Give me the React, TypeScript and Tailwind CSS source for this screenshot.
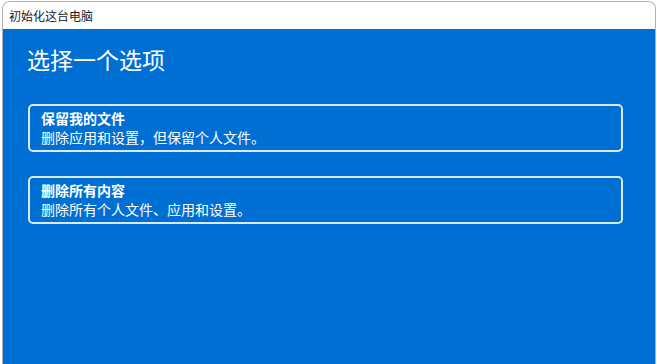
import React from "react";

const font = { fontFamily: '"Noto Sans CJK SC", "Noto Sans", sans-serif' };

function Option({ title, desc }: { title: string; desc: string }) {
  return (
    <div className="ml-[25px] mr-[32px] h-[48px] rounded-[5px] border-2 border-[#dbe9f8] pl-[11px] flex flex-col justify-center">
      <div className="text-[14px] leading-[19px] font-bold text-white">{title}</div>
      <div className="text-[14px] leading-[19px] text-white">{desc}</div>
    </div>
  );
}

export default function App() {
  return (
    <div className="w-[657px] h-[364px] bg-white overflow-hidden pl-[2px] pr-[1px] pt-[1px]" style={font}>
      <div className="w-full h-full flex flex-col border-l border-r border-t border-[#b0b0b0] rounded-t-[8px] overflow-hidden">
        <div className="h-[27px] bg-white flex items-center pl-[6px] text-[12px] text-[#1a1a1a]">初始化这台电脑</div>
        <div className="flex-1 bg-[#006fd3] flex flex-col">
          <div className="pl-[24px] pt-[14px] text-[23px] leading-[32px] text-white">选择一个选项</div>
          <div className="mt-[29px] flex flex-col gap-[24px]">
            <Option title="保留我的文件" desc="删除应用和设置，但保留个人文件。" />
            <Option title="删除所有内容" desc="删除所有个人文件、应用和设置。" />
          </div>
        </div>
      </div>
    </div>
  );
}
